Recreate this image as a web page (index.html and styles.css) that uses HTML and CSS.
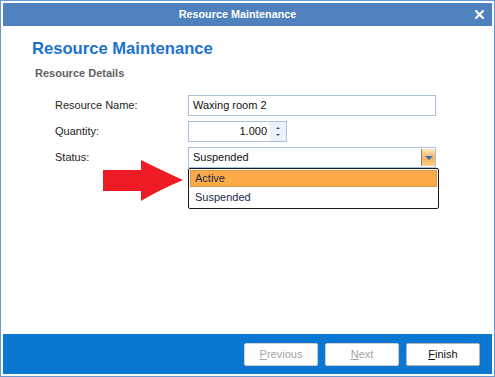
FILE: index.html
```html
<!DOCTYPE html>
<html>
<head>
<title>Resource Maintenance</title>
<meta charset="UTF-8">
<link rel="stylesheet" href="styles.css">
</head>

<body>
<div class="window">
    <div class="titlebar">
        Resource Maintenance
        <svg class="close" width="9" height="9" viewBox="0 0 9 9"><path d="M1 1L8 8M8 1L1 8" stroke="#fff" stroke-width="2.2" stroke-linecap="square"/></svg>
    </div>

    <div class="content">
        <div class="heading">Resource Maintenance</div>
        <div class="section">Resource Details</div>

        <div class="form">
            <div class="label">Resource Name:</div>
            <div class="field">Waxing room 2</div>

            <div class="label">Quantity:</div>
            <div class="field qty">
                <span class="qty-value">1.000</span>
                <span class="spin">
                    <span class="spin-up"></span>
                    <span class="spin-down"></span>
                </span>
            </div>

            <div class="label">Status:</div>
            <div class="combo">
                <div class="field combo-box">
                    <span class="combo-value">Suspended</span>
                    <span class="combo-btn"><span class="combo-tri"></span></span>
                </div>
                <div class="list">
                    <div class="item active">Active</div>
                    <div class="item">Suspended</div>
                </div>
            </div>
        </div>
    </div>

    <div class="footer">
        <button class="btn disabled"><u>P</u>revious</button>
        <button class="btn disabled"><u>N</u>ext</button>
        <button class="btn"><u>F</u>inish</button>
    </div>

    <svg class="pointer" width="84" height="44" viewBox="0 0 84 44"><path d="M2 11H40V1Q58 10 82 21Q58 31 40 42V32H2Z" fill="#ed1c24"/></svg>
</div>
</body>
</html>
```

FILE: styles.css
```css
html,body{margin:0;padding:0;}
body{font-family:"Liberation Sans",Arial,sans-serif;font-size:11px;color:#222;background:#fff;}

.window{position:relative;width:495px;height:377px;box-sizing:border-box;border:1px solid #6a98d0;padding:2px;display:flex;flex-direction:column;background:#fff;}

.titlebar{position:relative;height:23px;line-height:23px;padding-right:20px;background:#4f81bd;color:#fff;font-weight:bold;font-size:10.8px;text-align:center;}
.titlebar .close{position:absolute;right:8px;top:7px;}

.content{flex:1;padding:13px 0 0 29px;}
.heading{font-size:16.6px;line-height:20px;font-weight:bold;color:#1b72cf;}
.section{margin:7px 0 0 3px;font-size:11px;line-height:14px;font-weight:bold;color:#5f5f5f;}

.form{display:grid;grid-template-columns:133px 248px;grid-auto-rows:21px;row-gap:5px;margin:15px 0 0 23px;}
.label{line-height:21px;color:#1e1e1e;}
.field{box-sizing:border-box;height:21px;line-height:19px;border:1px solid #abc1dc;padding:0 4px;color:#111;background:#fff;}

.qty{width:99px;display:flex;padding:0 0 0 4px;}
.qty-value{flex:1;text-align:right;padding-right:3px;}
.spin{width:16px;display:flex;flex-direction:column;align-items:center;justify-content:center;gap:5px;background:#edf2f9;}
.spin-up{width:0;height:0;border-left:2px solid transparent;border-right:2px solid transparent;border-bottom:2px solid #2b4f7f;}
.spin-down{width:0;height:0;border-left:2px solid transparent;border-right:2px solid transparent;border-top:2px solid #2b4f7f;}

.combo{position:relative;}
.combo-box{display:flex;padding-right:0;}
.combo-value{flex:1;}
.combo-btn{width:13px;margin:1px 0;border-left:1px solid #9a8455;background:linear-gradient(#fde7c0,#f8b35c 55%,#fbd191);display:flex;align-items:center;justify-content:center;}
.combo-tri{width:0;height:0;border-left:4px solid transparent;border-right:4px solid transparent;border-top:4px solid #3c6cb4;}

.list{position:absolute;left:0;top:21px;width:251px;box-sizing:border-box;border:1px solid #1a1a1a;border-radius:2px;padding:1px;background:#fff;}
.item{height:19px;line-height:19px;padding-left:5px;color:#1c2a47;box-sizing:border-box;}
.item.active{height:17px;line-height:15px;margin-bottom:1px;border:1px solid #d99a4e;padding-left:4px;background:#fbaa47;}

.footer{height:40px;background:#0a78d0;display:flex;justify-content:flex-end;align-items:center;gap:7px;padding-right:12px;}
.btn{width:74px;height:23px;box-sizing:border-box;border:1px solid #b5b5b5;border-radius:2px;background:#fff;font-family:"Liberation Sans",Arial,sans-serif;font-size:11px;color:#111;padding:0;}
.btn.disabled{color:#a3a3a3;border-color:#cfcfcf;}

.pointer{position:absolute;left:100px;top:158px;}
```
